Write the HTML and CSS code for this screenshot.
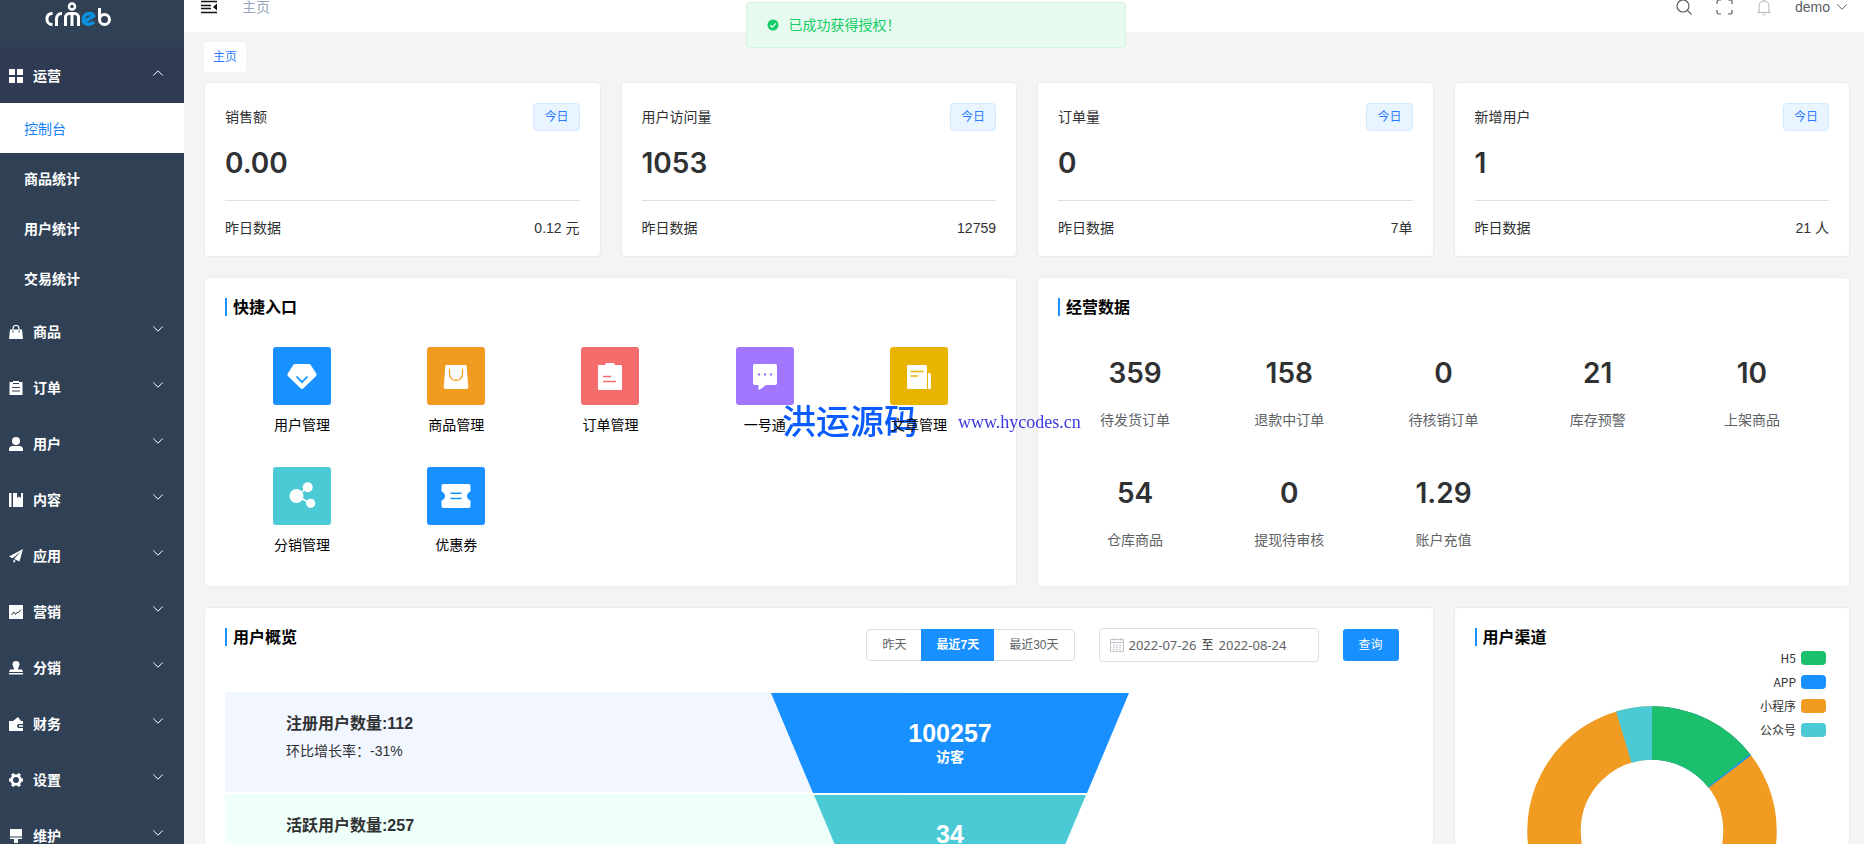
FILE: index.html
```html
<!DOCTYPE html>
<html lang="zh-CN">
<head>
<meta charset="utf-8">
<title>主页</title>
<link rel="stylesheet" href="styles.css">
</head>
<body>
<svg class="defs" aria-hidden="true">
  <symbol id="down" viewBox="0 0 12 12"><path d="M1.300 3.500 6 8.200l4.700-4.700" fill="none" stroke="currentColor" stroke-width="1"/></symbol>
</svg>
<div class="app">
  <aside class="sidebar">
    <div class="logo">
      <svg width="68" height="26" viewBox="0 0 68 26" role="img" aria-label="crmeb" fill="none" stroke="#fff" stroke-width="3" stroke-linecap="butt">
        <path d="M7.500 11.500H7A4.800 4.800 0 0 0 2 16.500v1a5 5 0 0 0 5 5h.5"/>
        <path d="M11.500 24v-7.500a5 5 0 0 1 5-5h.5"/>
        <path d="M20.500 24v-8a4 4 0 0 1 4-4.500h5a4 4 0 0 1 4 4.500v8M27 12v12"/>
        <circle cx="27" cy="4.500" r="3" stroke-width="2.500"/>
        <path d="M39.500 19.500l9-5.500c-1.500-3.500-9.500-3.500-10 3-.3 6 7 6.500 10.500 3" stroke="#0d8fe0" stroke-width="3.500"/>
        <path d="M54.500 6v11"/><circle cx="59.500" cy="17.500" r="5"/>
      </svg>
    </div>
    <nav>
      <button class="group open" type="button"><svg viewBox="0 0 14 14"><path d="M0 0h6v6H0zM8 0h6v6H8zM0 8h6v6H0zM8 8h6v6H8z"/></svg><span>运营</span><svg class="arrow"><use href="#down"/></svg></button>
      <a class="sub active" href="#">控制台</a>
      <a class="sub" href="#">商品统计</a>
      <a class="sub" href="#">用户统计</a>
      <a class="sub" href="#">交易统计</a>
      <button class="group" type="button"><svg viewBox="0 0 14 14"><path d="M1 4.500h12L14 14H0z"/><path d="M4 6.500V3.500a3 3 0 0 1 6 0v3" fill="none" stroke="#fff" stroke-width="1.200"/><path d="M4 5.500v2M10 5.500v2" stroke="#304156"/></svg><span>商品</span><svg class="arrow"><use href="#down"/></svg></button>
      <button class="group" type="button"><svg viewBox="0 0 14 14"><path d="M.5 1H4V0h6v1h3.500v13H.5z"/><path d="M4 2.500h6M3 6.500h8M3 10h8" stroke="#304156"/></svg><span>订单</span><svg class="arrow"><use href="#down"/></svg></button>
      <button class="group" type="button"><svg viewBox="0 0 14 14"><circle cx="7" cy="4" r="4"/><path d="M0 14v-1.500A3.500 3.500 0 0 1 3.500 9h7a3.500 3.500 0 0 1 3.500 3.500V14z"/></svg><span>用户</span><svg class="arrow"><use href="#down"/></svg></button>
      <button class="group" type="button"><svg viewBox="0 0 14 14"><path d="M0 0h2.500v14H0zM4 0h4v5l2-1.500L12 5V0h2v14H4z"/></svg><span>内容</span><svg class="arrow"><use href="#down"/></svg></button>
      <button class="group" type="button"><svg viewBox="0 0 14 14"><path d="M14 0 0 7.500l3.500 1.800L12 2.500 5 10l5.500 2.500zM4.500 10.800V14L6.800 12z"/></svg><span>应用</span><svg class="arrow"><use href="#down"/></svg></button>
      <button class="group" type="button"><svg viewBox="0 0 14 14"><path d="M0 0h14v14H0z"/><path d="M2.500 10 5 7l1.500 2.500L8.500 7 9 8l3-3.500" fill="none" stroke="#304156"/></svg><span>营销</span><svg class="arrow"><use href="#down"/></svg></button>
      <button class="group" type="button"><svg viewBox="0 0 14 14"><path d="M7 0a3.500 3.500 0 0 1 3.500 3.500C10.500 5.500 9 6 9 8.500h4l1 2.500H0l1-2.500h4C5 6 3.500 5.500 3.500 3.500A3.500 3.500 0 0 1 7 0zM0 12h14v1.500H0z"/></svg><span>分销</span><svg class="arrow"><use href="#down"/></svg></button>
      <button class="group" type="button"><svg viewBox="0 0 14 14"><path d="M0 4h4l5-4 3 4h2v3h-4a2 2 0 0 0 0 4h4v3H0z"/><path d="M10 8.200h4v1.600h-4z"/></svg><span>财务</span><svg class="arrow"><use href="#down"/></svg></button>
      <button class="group" type="button"><svg viewBox="0 0 16 16"><circle cx="8" cy="8" r="5" fill="none" stroke="#fff" stroke-width="3.200"/><g stroke="#fff" stroke-width="3.400"><path d="M3.800.8 5.500 3.700M12.200.8l-1.700 2.900M3.800 15.200l1.700-2.900M12.200 15.200l-1.700-2.900M0 8h3M16 8h-3"/></g></svg><span>设置</span><svg class="arrow"><use href="#down"/></svg></button>
      <button class="group" type="button"><svg viewBox="0 0 14 14"><path d="M1 0h12v7.500H1zM1 8.500h12V10H9v4H5v-4H1z"/></svg><span>维护</span><svg class="arrow"><use href="#down"/></svg></button>
    </nav>
  </aside>

  <div class="page">
    <header class="topbar">
      <button class="icon-btn" type="button" aria-label="收起菜单"><svg width="16" height="14" viewBox="0 0 16 14"><path d="M0 1.500h16M0 5.500h10M0 8.500h10M0 12.500h16" stroke="#111" stroke-width="1.500"/><path d="M16 3.500v7L12 7z" fill="#111"/></svg></button>
      <span class="crumb">主页</span>
      <div class="tools">
        <button class="icon-btn" type="button" aria-label="搜索"><svg width="16" height="16" viewBox="0 0 16 16" fill="none" stroke="#5a5e66" stroke-width="1.200"><circle cx="7" cy="7" r="6"/><path d="m11.200 11.200 4.300 4.300"/></svg></button>
        <button class="icon-btn" type="button" aria-label="全屏"><svg width="17" height="16" viewBox="0 0 17 16" fill="none" stroke="#5a5e66" stroke-width="1.200"><path d="M1 5V3a2 2 0 0 1 2-2h2M12 1h2a2 2 0 0 1 2 2v2M16 11v2a2 2 0 0 1-2 2h-2M5 15H3a2 2 0 0 1-2-2v-2"/></svg></button>
        <button class="icon-btn" type="button" aria-label="消息"><svg width="14" height="18" viewBox="0 0 14 18" fill="none" stroke="#b0b3b8"><path d="M.5 14.500h13M2 14.500V8a5 5 0 0 1 10 0v6.500M7 3V1M5.500 16.500q1.500 1.200 3 0"/></svg></button>
        <button class="user" type="button">demo <svg width="12" height="12"><use href="#down"/></svg></button>
      </div>
    </header>

    <main class="content">
      <a class="tab" href="#">主页</a>

      <div class="grid">
        <section class="card stat">
          <div class="line"><span>销售额</span><span class="tag">今日</span></div>
          <strong>0.00</strong>
          <div class="line foot"><span>昨日数据</span><span>0.12 元</span></div>
        </section>
        <section class="card stat">
          <div class="line"><span>用户访问量</span><span class="tag">今日</span></div>
          <strong>1053</strong>
          <div class="line foot"><span>昨日数据</span><span>12759</span></div>
        </section>
        <section class="card stat">
          <div class="line"><span>订单量</span><span class="tag">今日</span></div>
          <strong>0</strong>
          <div class="line foot"><span>昨日数据</span><span>7单</span></div>
        </section>
        <section class="card stat">
          <div class="line"><span>新增用户</span><span class="tag">今日</span></div>
          <strong>1</strong>
          <div class="line foot"><span>昨日数据</span><span>21 人</span></div>
        </section>

        <section class="card half">
          <h2>快捷入口</h2>
          <div class="five">
            <a class="entry" href="#"><span class="tile blue"><svg viewBox="0 0 30 30"><path d="M8 3h14q1 0 1.600.8l5.800 9q.6 1.200-.3 2.200L16.500 27.300q-1.500 1.500-3 0L.9 15q-.9-1-.3-2.200l5.800-9Q7 3 8 3z" fill="#fff"/><path d="m9.500 15.500 5.500 5.700 5.500-5.700" fill="none" stroke="#1890ff" stroke-width="1.800"/></svg></span>用户管理</a>
            <a class="entry" href="#"><span class="tile orange"><svg viewBox="0 0 30 30"><path d="M5.500 4h19q1 0 1.100 1l1.700 21q.1 2-1.600 2H4.300q-1.700 0-1.600-2L4.400 5q.1-1 1.100-1z" fill="#fff"/><path d="M8.500 7.500V13a6.500 6.500 0 0 0 13 0V7.500" fill="none" stroke="#f09b22" stroke-width="1.300"/></svg></span>商品管理</a>
            <a class="entry" href="#"><span class="tile red"><svg viewBox="0 0 30 30"><path d="M4 4h6q0-2 2-2h6q2 0 2 2h6q1 0 1 1v23q0 1-1 1H4q-1 0-1-1V5q0-1 1-1z" fill="#fff"/><path d="M8 15.500h8M8 20.500h13" stroke="#f56c6c" stroke-width="1.500"/></svg></span>订单管理</a>
            <a class="entry" href="#"><span class="tile purple"><svg viewBox="0 0 30 30"><path d="M5 3h20q2 0 2 2v17q0 2-2 2h-9l-6 4.500q-1.500.8-1.500-.8V24H5q-2 0-2-2V5q0-2 2-2z" fill="#fff"/><g fill="#a277ff"><circle cx="9" cy="13.500" r="1.200"/><circle cx="15" cy="13.500" r="1.200"/><circle cx="21" cy="13.500" r="1.200"/></g></svg></span>一号通</a>
            <a class="entry" href="#"><span class="tile yellow"><svg viewBox="0 0 30 30"><path d="M3.500 4h18q1.500 0 1.500 1.500V28H4.500Q3 28 3 26.500V5q0-1 .5-1zM24 12h1.500q1.500 0 1.500 1.500v13q0 1.500-1.500 1.500H24z" fill="#fff"/><path d="M6.500 10.500h13M6.500 15h7.500" stroke="#e8b400" stroke-width="1.400"/></svg></span>文章管理</a>
            <a class="entry" href="#"><span class="tile teal"><svg viewBox="0 0 30 30" fill="#fff"><path d="m9.500 15 11-8.500M9.500 15l14.500 7.500" stroke="#fff" stroke-width="1.500"/><circle cx="9.500" cy="15" r="7"/><circle cx="20.700" cy="6.300" r="5"/><circle cx="23.700" cy="22.300" r="4.600"/></svg></span>分销管理</a>
            <a class="entry" href="#"><span class="tile blue"><svg viewBox="0 0 30 30"><path d="M2.500 3h25Q29.500 3 29.500 5v5.500q-3.500 1.500-3.500 4.500t3.500 4.500V25q0 2-2 2h-25q-2 0-2-2v-5.500Q4 18 4 15T.5 10.500V5q0-2 2-2z" fill="#fff"/><path d="M9.500 12.200h11M9.500 17.500h11" stroke="#1890ff" stroke-width="1.400"/></svg></span>优惠券</a>
          </div>
        </section>

        <section class="card half">
          <h2>经营数据</h2>
          <div class="five">
            <div class="figure"><strong>359</strong>待发货订单</div>
            <div class="figure"><strong>158</strong>退款中订单</div>
            <div class="figure"><strong>0</strong>待核销订单</div>
            <div class="figure"><strong>21</strong>库存预警</div>
            <div class="figure"><strong>10</strong>上架商品</div>
            <div class="figure"><strong>54</strong>仓库商品</div>
            <div class="figure"><strong>0</strong>提现待审核</div>
            <div class="figure"><strong>1.29</strong>账户充值</div>
          </div>
        </section>

        <section class="card wide">
          <div class="card-head">
            <h2>用户概览</h2>
            <div class="filters">
              <div class="segment">
                <button type="button">昨天</button><button class="on" type="button">最近7天</button><button type="button">最近30天</button>
              </div>
              <div class="range">
                <svg width="14" height="14" viewBox="0 0 14 14" fill="none" stroke="#c0c4cc"><path d="M.5 1.500h13v12H.5zM.5 4.500h13M3.500 0v2.500M10.500 0v2.500M3 7h2M6 7h2M9 7h2M3 9.200h2M6 9.200h2M9 9.200h2M3 11.400h2M6 11.400h2M9 11.400h2"/></svg>
                <input type="text" aria-label="开始日期" value="2022-07-26">
                <span>至</span>
                <input type="text" aria-label="结束日期" value="2022-08-24">
              </div>
              <button class="primary" type="button">查询</button>
            </div>
          </div>
          <div class="overview">
            <div class="band lilac"><b>注册用户数量:112</b><span>环比增长率：-31%</span></div>
            <div class="band mint"><b>活跃用户数量:257</b></div>
            <svg class="funnel" width="358" height="204" viewBox="0 0 358 204">
              <path d="M0 1h358l-42 100H42z" fill="#1890ff"/>
              <path d="M43 103h272l-42 100H85z" fill="#4bcad5"/>
              <g fill="#fff" font-weight="700" text-anchor="middle">
                <text class="fn-num" x="179" y="50">100257</text>
                <text class="fn-label" x="179" y="70">访客</text>
                <text class="fn-num" x="179" y="151">34</text>
              </g>
            </svg>
          </div>
        </section>

        <section class="card channel">
          <h2>用户渠道</h2>
          <svg class="donut" width="250" height="250" viewBox="-125 -125 250 250">
            <g fill="none" stroke-width="53.500" transform="rotate(-90)">
              <circle r="98" pathLength="360" stroke="#f09b22"/>
              <circle r="98" pathLength="360" stroke="#1890ff" stroke-dasharray="52.600 307.400"/>
              <circle r="98" pathLength="360" stroke="#1cbf6c" stroke-dasharray="51.800 308.200"/>
              <circle r="98" pathLength="360" stroke="#4bcad5" stroke-dasharray="16.800 343.200" stroke-dashoffset="16.800"/>
            </g>
          </svg>
          <ul class="legend">
            <li>H5<i class="c-green"></i></li>
            <li>APP<i class="c-blue"></i></li>
            <li>小程序<i class="c-orange"></i></li>
            <li>公众号<i class="c-teal"></i></li>
          </ul>
        </section>
      </div>
    </main>
  </div>
</div>

<div class="toast" role="status"><svg width="12" height="12" viewBox="0 0 12 12"><circle cx="6" cy="6" r="5.500" fill="#13ce66"/><path d="m3.200 6.200 2 1.900 3.600-3.800" fill="none" stroke="#fff" stroke-width="1.200"/></svg>已成功获得授权！</div>
<div class="stamp"><span class="stamp-name">洪运源码</span><span class="stamp-url">www.hycodes.cn</span></div>
</body>
</html>
```

FILE: styles.css
```css
* { box-sizing: border-box; }
body {
  margin: 0;
  overflow: hidden;
  background: #f4f4f4;
  color: #303133;
  font: 14px/20px "Liberation Sans", "Noto Sans CJK SC", sans-serif;
}
button, input { font: inherit; color: inherit; border: 0; background: none; padding: 0; }
button { cursor: pointer; }
a { color: inherit; text-decoration: none; }
.defs { position: absolute; width: 0; height: 0; }

/* the shell rests slightly scrolled */
.app { display: flex; height: calc(100vh + 18px); margin-top: -18px; overflow: hidden; }

.sidebar { flex: 0 0 184px; background: #304156; color: #fff; font-weight: 700; overflow: hidden; }
.logo { display: flex; align-items: center; justify-content: center; height: 65px; padding-right: 26px; }
.group { display: flex; align-items: center; gap: 10px; width: 100%; height: 56px; padding: 2px 20px 0 9px; text-align: left; }
.group svg { width: 14px; height: 14px; fill: #fff; }
.group span { flex: 1; }
.group .arrow { width: 12px; height: 12px; margin-bottom: 6px; }
.group.open { background: #2f3b52; }
.group.open .arrow { transform: rotate(180deg); }
.sub { display: block; height: 50px; padding-left: 24px; line-height: 52px; }
.sub.active { background: #fff; color: #1682f8; font-weight: 400; }

.page { flex: 1; min-width: 0; }
.topbar { display: flex; align-items: center; height: 50px; padding: 0 16px 0 17px; background: #fff; }
.icon-btn { display: flex; }
.crumb { margin-left: 25px; color: #97a8be; }
.tools { display: flex; align-items: center; gap: 24px; margin-left: auto; color: #5a5e66; }
.user { display: flex; align-items: center; gap: 6px; }

.content { padding: 10px 14px 0 20px; }
.tab { display: inline-block; padding: 0 9px; border-radius: 3px; background: #fff; color: #2d7cff; font-size: 12px; line-height: 31px; height: 30px; vertical-align: top; }
.grid { display: grid; grid-template-columns: repeat(4, minmax(0, 1fr)); gap: 20px; margin-top: 10px; }
.card { position: relative; padding: 20px; border: 1px solid #e6ebf5; border-radius: 4px; background: #fff; }
.half { grid-column: span 2; padding-bottom: 31px; }
.wide { grid-column: span 3; }
h2 { height: 18px; margin: 0; padding-left: 6px; border-left: 2px solid #1890ff; color: #000; font-size: 16px; line-height: 20px; }

.stat { padding-bottom: 17px; }
.line { display: flex; align-items: center; justify-content: space-between; }
.tag { padding: 0 10px; border: 1px solid #d1e9ff; border-radius: 4px; background: #e8f4ff; color: #2d7cff; font-size: 12px; line-height: 26px; }
.stat strong { display: block; margin: 10px 0 15px; font: 600 28px/44px Inter, sans-serif; }
.foot { padding-top: 16px; border-top: 1px solid #dcdfe6; line-height: 22px; }

.five { display: grid; grid-template-columns: repeat(5, minmax(0, 1fr)); row-gap: 32px; margin-top: 31px; text-align: center; }
.entry { display: flex; flex-direction: column; align-items: center; gap: 10px; color: #000; }
.tile { display: grid; place-items: center; width: 58px; height: 58px; border-radius: 3px; }
.tile svg { width: 30px; height: 30px; }
.blue { background: #1890ff; }
.orange { background: #f09b22; }
.red { background: #f56c6c; }
.purple { background: #a277ff; }
.yellow { background: #e8b400; }
.teal { background: #4bcad5; }
.figure { display: flex; flex-direction: column; height: 88px; color: #606266; }
.figure strong { margin-bottom: 11px; color: #303133; font: 600 28px/52px Inter, sans-serif; }

.card-head { display: flex; align-items: flex-start; justify-content: space-between; }
.filters { display: flex; align-items: center; gap: 24px; padding-right: 14px; font-size: 12px; color: #606266; }
.segment { display: flex; height: 32px; border: 1px solid #dcdfe6; border-radius: 4px; }
.segment button { padding: 0 15px; }
.segment .on { margin: -1px 0; background: #1890ff; color: #fff; font-weight: 700; }
.range { display: flex; align-items: center; gap: 5px; width: 220px; height: 34px; padding: 0 10px; border: 1px solid #dcdfe6; border-radius: 4px; }
.range input { width: 68px; font-family: "Noto Sans", sans-serif; font-size: 13px; }
.range span { color: #303133; }
.primary { width: 56px; height: 32px; border-radius: 3px; background: #1890ff; color: #fff; }

.overview { position: relative; display: grid; gap: 2px; margin-top: 30px; }
.band { display: flex; flex-direction: column; gap: 7px; width: 57%; height: 100px; padding: 22px 0 0 61px; }
.band b { font-size: 16px; }
.lilac { background: #f1f6ff; }
.mint { background: #effffa; }
.funnel { position: absolute; left: 46%; top: 0; }
.fn-num { font-size: 25px; }
.fn-label { font-size: 14px; }

.donut { display: block; margin: 60px auto 0; }
.legend { position: absolute; top: 38px; right: 23px; margin: 0; padding: 0; list-style: none; font: 12px/24px "Noto Sans CJK SC", sans-serif; color: #333; }
.legend li { display: flex; align-items: center; justify-content: flex-end; gap: 5px; }
.legend i { width: 25px; height: 14px; border-radius: 4px; }
.c-green { background: #1cbf6c; }
.c-blue { background: #1890ff; }
.c-orange { background: #f09b22; }
.c-teal { background: #4bcad5; }

.toast { position: fixed; top: 2px; left: 40%; display: flex; align-items: center; gap: 10px; width: 380px; height: 46px; padding: 0 20px; border: 1px solid #d0f5e0; border-radius: 4px; background: #e7faf0; color: #13ce66; }
.stamp { position: absolute; top: 402px; left: 782px; display: flex; align-items: center; gap: 40px; line-height: 40px; mix-blend-mode: multiply; }
.stamp-name { color: #0a5cff; font-size: 34px; font-weight: 500; }
.stamp-url { color: #3a3ae0; font-family: "Liberation Serif", serif; font-size: 18px; }
```
